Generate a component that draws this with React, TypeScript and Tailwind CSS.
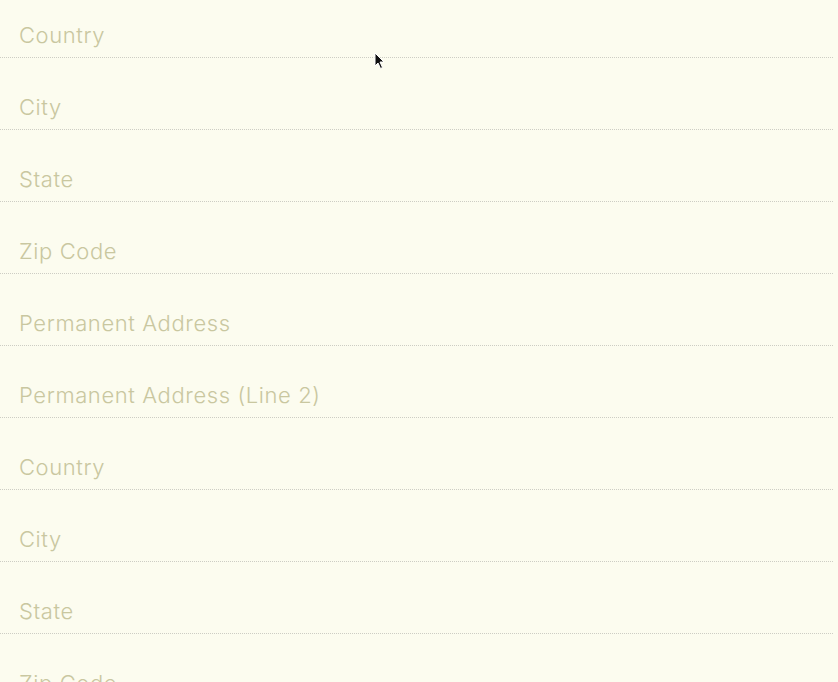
const fields = [
  'Country',
  'City',
  'State',
  'Zip Code',
  'Permanent Address',
  'Permanent Address (Line 2)',
  'Country',
  'City',
  'State',
  'Zip Code',
];

export default function App() {
  return (
    <div className="relative h-[682px] w-[838px] overflow-hidden bg-[#fcfcef]" style={{ fontFamily: 'Inter, Lato, sans-serif' }}>
      <div className="-mt-[14px] w-[833px]">
        {fields.map((label, i) => (
          <div key={i} className="flex h-[72px] items-end border-b border-dotted border-[#cdcdc4] pb-[8px] pl-[19px]">
            <input
              placeholder={label}
              className="w-full bg-transparent text-[22px] font-light leading-[28px] tracking-[0.6px] outline-none placeholder:text-[#c9c7a0]"
            />
          </div>
        ))}
      </div>

      {/* mouse pointer */}
      <svg className="absolute left-[374px] top-[52px]" width="12" height="18" viewBox="0 0 12 18">
        <path d="M1 1 L1 14 L4 11 L6.5 16.5 L8.5 15.5 L6 10 L10 10 Z" fill="#111" stroke="#fff" strokeWidth="1" />
      </svg>
    </div>
  );
}
